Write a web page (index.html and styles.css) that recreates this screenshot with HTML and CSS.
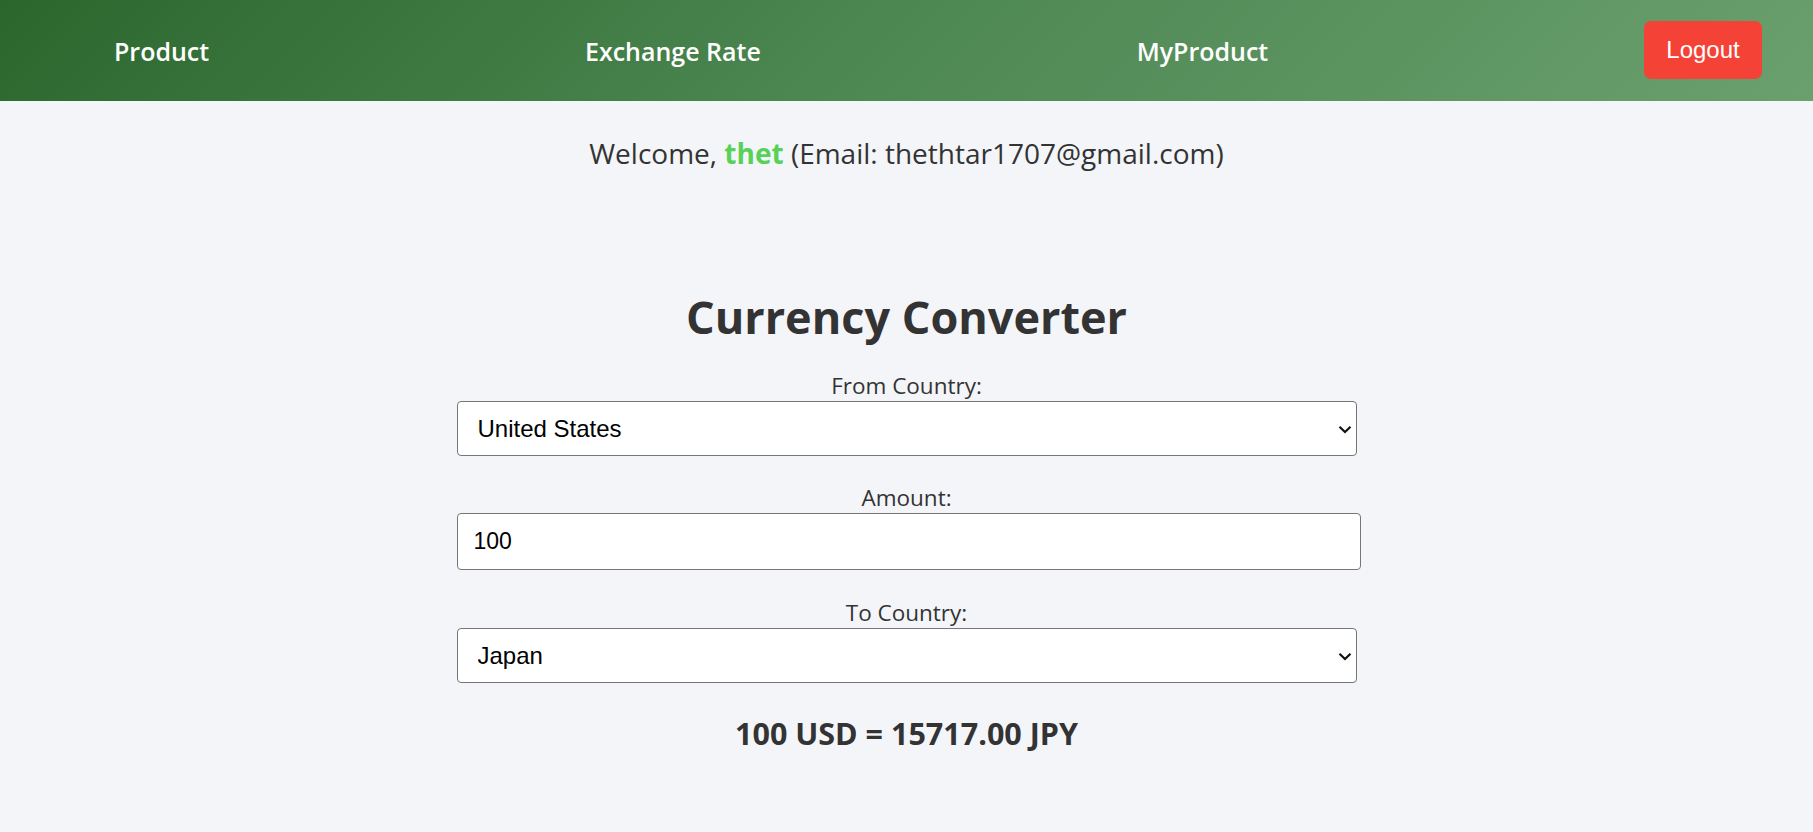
FILE: index.html
```html
<!DOCTYPE html>
<html lang="en">
<head>
<meta charset="utf-8">
<title>Currency Converter</title>
<link rel="stylesheet" href="styles.css">
</head>
<body>
<header class="topbar">
  <nav class="nav">
    <a class="nav-link" href="#">Product</a>
    <a class="nav-link" href="#">Exchange Rate</a>
    <a class="nav-link" href="#">MyProduct</a>
    <button class="logout" type="button">Logout</button>
  </nav>
</header>
<p class="welcome">Welcome, <strong class="user">thet</strong> (Email: thethtar1707@gmail.com)</p>
<main class="converter">
  <h1 class="title">Currency Converter</h1>
  <form class="form">
    <label class="field-label" for="from">From Country:</label>
    <div class="select-wrap">
      <select class="field select" id="from">
        <option>United States</option>
        <option>Japan</option>
      </select>
      <svg class="chevron" width="14" height="9" viewBox="0 0 14 9" aria-hidden="true"><path d="M1.5 1.8 L7 7 L12.5 1.8" fill="none" stroke="#111" stroke-width="2.2"/></svg>
    </div>
    <label class="field-label" for="amount">Amount:</label>
    <input class="field input" id="amount" type="number" value="100">
    <label class="field-label" for="to">To Country:</label>
    <div class="select-wrap last">
      <select class="field select" id="to">
        <option>Japan</option>
        <option>United States</option>
      </select>
      <svg class="chevron" width="14" height="9" viewBox="0 0 14 9" aria-hidden="true"><path d="M1.5 1.8 L7 7 L12.5 1.8" fill="none" stroke="#111" stroke-width="2.2"/></svg>
    </div>
  </form>
  <p class="result">100 USD = 15717.00 JPY</p>
</main>
</body>
</html>
```
FILE: styles.css
```css
* { box-sizing: border-box; }
html, body { margin: 0; padding: 0; }
body {
  background: #f4f5f9;
  color: #333;
  font-family: "Open Sans", "Noto Sans", sans-serif;
}
.topbar {
  height: 101px;
  background: linear-gradient(135deg, #2b672d 0%, #4e8853 50%, #6aa06e 100%);
}
.nav {
  height: 100%;
  display: flex;
  align-items: center;
  justify-content: space-between;
  padding: 0 51px 0 114px;
}
.nav-link {
  color: #fff;
  text-decoration: none;
  font-size: 25px;
  font-weight: 600;
}
.logout {
  margin-top: -2px;
  background: #f44336;
  color: #fff;
  border: none;
  border-radius: 7px;
  font-family: "Liberation Sans", Arial, sans-serif;
  font-size: 24px;
  width: 118px;
  height: 58px;
  padding: 0;
}
.welcome {
  margin: 33px 0 0;
  text-align: center;
  font-size: 28px;
  line-height: 38px;
}
.user { color: #58d158; font-weight: 700; }
.converter {
  width: 900px;
  margin: 0 auto;
  text-align: center;
}
.title {
  margin: 115px 0 0;
  font-size: 45px;
  line-height: 60px;
  font-weight: 700;
}
.form {
  display: flex;
  flex-direction: column;
  margin-top: 24px;
}
.field-label {
  font-size: 22.5px;
  line-height: 30px;
}
.field {
  font-family: "Liberation Sans", Arial, sans-serif;
  color: #000;
  background: #fff;
  border: 1px solid #767676;
  border-radius: 4px;
}
.select-wrap {
  position: relative;
  width: 900px;
  margin-bottom: 27px;
}
.select-wrap.last { margin-bottom: 0; }
.select {
  display: block;
  width: 100%;
  height: 55px;
  font-size: 24px;
  padding: 0 36px 0 20px;
  appearance: none;
  -webkit-appearance: none;
}
.chevron {
  position: absolute;
  right: 5px;
  top: 50%;
  margin-top: -4px;
  pointer-events: none;
}
.input {
  width: 904px;
  height: 57px;
  font-size: 23px;
  padding: 0 16px;
  margin-bottom: 28px;
}
.result {
  margin: 32px 0 0;
  font-size: 30.5px;
  line-height: 36px;
  font-weight: 700;
}
```
